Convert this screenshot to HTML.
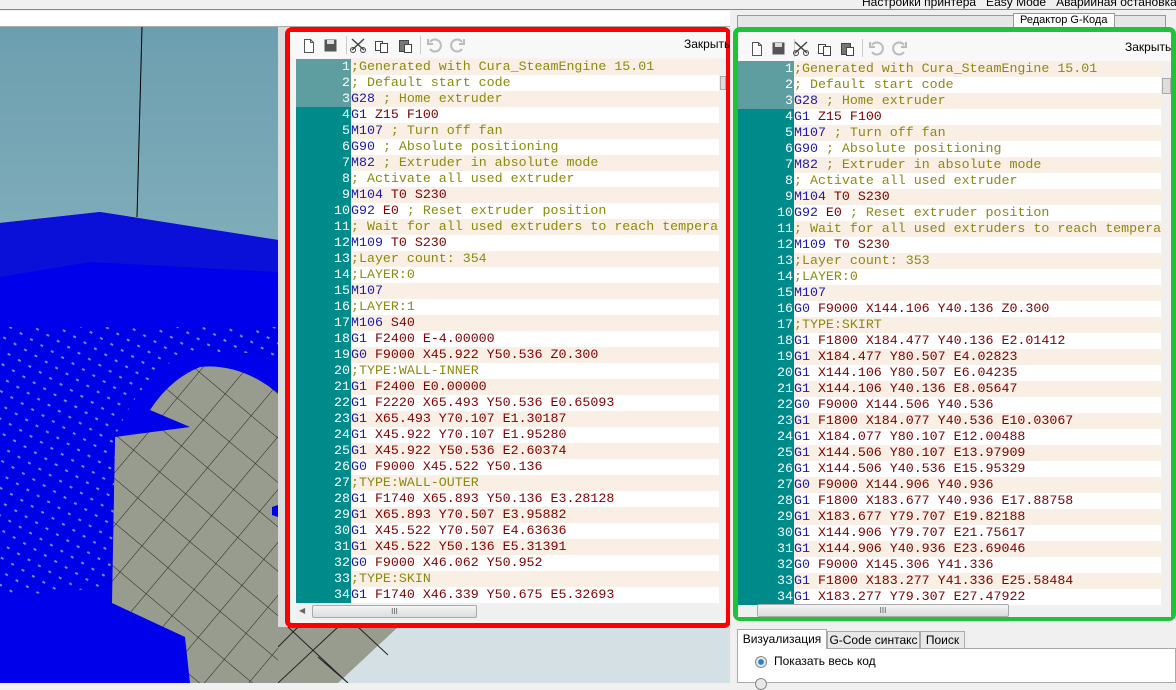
<!DOCTYPE html>
<html><head><meta charset="utf-8"><style>
*{margin:0;padding:0;box-sizing:border-box}
body{width:1176px;height:683px;overflow:hidden;position:relative;font-family:"Liberation Sans",sans-serif;background:#f0f0f0}
.abs{position:absolute}
.code{font-family:"Liberation Mono",monospace;font-size:13.3px;color:#800000}
.r{height:16px;line-height:16px;white-space:nowrap;display:flex}
.r:nth-child(odd){background:#faefe4}
.r:nth-child(even){background:#fff}
.r b{font-weight:normal;color:#fff;text-align:right;background:#008b8b;flex:none;padding-right:1px}
.r.h b{background:#5f9ea0}
.c{color:#8a8a10}
u{text-decoration:none;color:#1a1aa8}
.L b{width:55px}.R b{width:56px}
.tb svg{position:absolute}
</style></head><body>
<div class="abs" style="left:0;top:0;width:1176px;height:10px;background:#f0f0f0;border-bottom:1px solid #888"></div>
<div class="abs" style="left:862px;top:-5px;font-size:12px;color:#000;white-space:nowrap">Настройки принтера&nbsp;&nbsp;&nbsp;Easy Mode&nbsp;&nbsp;&nbsp;Аварийная остановка</div>
<div class="abs" style="left:0;top:11px;width:730px;height:16px;background:#fff;border-bottom:1px solid #aaa"></div>
<!-- 3D view -->
<svg class="abs" style="left:0;top:27px" width="278" height="656">
<defs>
<linearGradient id="sky" x1="0" y1="0" x2="0" y2="1"><stop offset="0" stop-color="#6c9fb0"/><stop offset="1" stop-color="#a8c8cc"/></linearGradient>
<pattern id="grid" width="34" height="34" patternUnits="userSpaceOnUse" patternTransform="rotate(40)"><rect width="34" height="34" fill="#989c8e"/><path d="M0 0H34M0 0V34" stroke="#222" stroke-width="1"/></pattern>
<pattern id="lat" width="12" height="12" patternUnits="userSpaceOnUse" patternTransform="rotate(30)"><rect width="12" height="12" fill="#0000e6"/><rect x="2" y="2" width="3" height="2" fill="#7090d0"/></pattern>
</defs>
<rect width="278" height="656" fill="url(#sky)"/>
<rect y="340" width="278" height="316" fill="url(#grid)"/>
<line x1="142" y1="0" x2="137" y2="190" stroke="#000"/>
<path d="M0 196 L100 185 L278 213 L278 366 Q240 336 200 340 Q170 352 150 383 L190 400 L115 410 L112 576 L185 610 L190 656 L0 656 Z" fill="#0000ea"/>
<path d="M0 300 L278 300 L278 330 Q220 320 180 330 Q140 350 115 410 L112 560 L0 570 Z" fill="url(#lat)"/>
<path d="M0 196 L100 185 L278 213 L278 245 L90 235 L0 250Z" fill="#0a10d8"/>
<path d="M272 480 L278 478 L278 490 L272 488Z" fill="#0000e8"/>
</svg>
<div class="abs" style="left:278px;top:27px;width:10px;height:600px;background:#d8dcdc"></div>
<svg class="abs" style="left:278px;top:627px" width="452" height="56">
<rect width="452" height="56" fill="#d4e0e4"/>
<path d="M0 0H120L60 56H0Z" fill="#989c8e"/>
<path d="M0 20L20 0M0 56L60 0M40 30L70 56M10 0L70 56M80 0L110 28" stroke="#222"/>
</svg>
<!-- LEFT panel -->
<div class="abs" style="left:285px;top:27px;width:446px;height:601px;border:5px solid #f00;border-radius:7px;background:#f4f4f4"></div>
<div class="abs tb" style="left:290px;top:32px;width:436px;height:26px;background:#f8f8f8">
<svg style="left:13px;top:7px" width="12" height="14"><path d="M1.5 .5h6l3 3v10h-9z M7.5 .5v3h3" fill="#fff" stroke="#555"/></svg>
<svg style="left:34px;top:7px" width="13" height="13"><rect x=".5" y=".5" width="12" height="12" fill="#555"/><rect x="3" y="1" width="7" height="4" fill="#ddd"/></svg>
<div class="abs" style="left:56px;top:4px;width:1px;height:18px;background:#ccc"></div>
<svg style="left:60px;top:6px" width="16" height="15"><path d="M2 1l12 11M14 1L2 12" stroke="#444" stroke-width="1.5"/><circle cx="3" cy="12" r="2.5" fill="none" stroke="#444"/><circle cx="13" cy="12" r="2.5" fill="none" stroke="#444"/></svg>
<svg style="left:84px;top:6px" width="15" height="15"><rect x="1.5" y="3.5" width="7" height="9" fill="#fff" stroke="#444"/><rect x="6.5" y="5.5" width="7" height="9" fill="#fff" stroke="#444"/></svg>
<svg style="left:108px;top:6px" width="15" height="15"><rect x="1.5" y="2.5" width="9" height="11" fill="#777" stroke="#444"/><rect x="6.5" y="6.5" width="7" height="8" fill="#fff" stroke="#444"/></svg>
<div class="abs" style="left:130px;top:4px;width:1px;height:18px;background:#ccc"></div>
<svg style="left:137px;top:6px" width="15" height="15"><path d="M3 4A6 6 0 1 1 3 11" fill="none" stroke="#bbb" stroke-width="2"/><path d="M1 1v5h5" fill="none" stroke="#bbb" stroke-width="2"/></svg>
<svg style="left:160px;top:6px" width="15" height="15"><path d="M12 4A6 6 0 1 0 12 11" fill="none" stroke="#bbb" stroke-width="2"/><path d="M14 1v5h-5" fill="none" stroke="#bbb" stroke-width="2"/></svg>
<div class="abs" style="left:394px;top:5px;font-size:12px;color:#000">Закрыть</div>
</div>
<div class="abs code L" style="left:296px;top:59px;width:423px;height:544px;overflow:hidden">
<div class="r h"><b>1</b><span class="c">;Generated with Cura_SteamEngine 15.01</span></div>
<div class="r h"><b>2</b><span class="c">; Default start code</span></div>
<div class="r h"><b>3</b><span><u>G28</u> <span class="c">; Home extruder</span></span></div>
<div class="r"><b>4</b><span><u>G1</u> Z15 F100</span></div>
<div class="r"><b>5</b><span><u>M107</u> <span class="c">; Turn off fan</span></span></div>
<div class="r"><b>6</b><span><u>G90</u> <span class="c">; Absolute positioning</span></span></div>
<div class="r"><b>7</b><span><u>M82</u> <span class="c">; Extruder in absolute mode</span></span></div>
<div class="r"><b>8</b><span class="c">; Activate all used extruder</span></div>
<div class="r"><b>9</b><span><u>M104</u> T0 S230</span></div>
<div class="r"><b>10</b><span><u>G92</u> E0 <span class="c">; Reset extruder position</span></span></div>
<div class="r"><b>11</b><span class="c">; Wait for all used extruders to reach tempera</span></div>
<div class="r"><b>12</b><span><u>M109</u> T0 S230</span></div>
<div class="r"><b>13</b><span class="c">;Layer count: 354</span></div>
<div class="r"><b>14</b><span class="c">;LAYER:0</span></div>
<div class="r"><b>15</b><span><u>M107</u></span></div>
<div class="r"><b>16</b><span class="c">;LAYER:1</span></div>
<div class="r"><b>17</b><span><u>M106</u> S40</span></div>
<div class="r"><b>18</b><span><u>G1</u> F2400 E-4.00000</span></div>
<div class="r"><b>19</b><span><u>G0</u> F9000 X45.922 Y50.536 Z0.300</span></div>
<div class="r"><b>20</b><span class="c">;TYPE:WALL-INNER</span></div>
<div class="r"><b>21</b><span><u>G1</u> F2400 E0.00000</span></div>
<div class="r"><b>22</b><span><u>G1</u> F2220 X65.493 Y50.536 E0.65093</span></div>
<div class="r"><b>23</b><span><u>G1</u> X65.493 Y70.107 E1.30187</span></div>
<div class="r"><b>24</b><span><u>G1</u> X45.922 Y70.107 E1.95280</span></div>
<div class="r"><b>25</b><span><u>G1</u> X45.922 Y50.536 E2.60374</span></div>
<div class="r"><b>26</b><span><u>G0</u> F9000 X45.522 Y50.136</span></div>
<div class="r"><b>27</b><span class="c">;TYPE:WALL-OUTER</span></div>
<div class="r"><b>28</b><span><u>G1</u> F1740 X65.893 Y50.136 E3.28128</span></div>
<div class="r"><b>29</b><span><u>G1</u> X65.893 Y70.507 E3.95882</span></div>
<div class="r"><b>30</b><span><u>G1</u> X45.522 Y70.507 E4.63636</span></div>
<div class="r"><b>31</b><span><u>G1</u> X45.522 Y50.136 E5.31391</span></div>
<div class="r"><b>32</b><span><u>G0</u> F9000 X46.062 Y50.952</span></div>
<div class="r"><b>33</b><span class="c">;TYPE:SKIN</span></div>
<div class="r"><b>34</b><span><u>G1</u> F1740 X46.339 Y50.675 E5.32693</span></div>
</div>
<div class="abs" style="left:719px;top:59px;width:7px;height:544px;background:#f0f0f0"></div>
<div class="abs" style="left:720px;top:76px;width:6px;height:14px;background:#ddd;border:1px solid #aaa"></div>
<div class="abs" style="left:296px;top:603px;width:430px;height:17px;background:#f0f0f0"></div>
<div class="abs" style="left:299px;top:606px;font-size:8px;color:#666">◀</div>
<div class="abs" style="left:312px;top:605px;width:165px;height:13px;background:linear-gradient(#f4f4f4,#dcdcdc);border:1px solid #aaa;border-radius:2px;font-size:8px;text-align:center;line-height:11px;color:#555">III</div>
<!-- RIGHT panel -->
<div class="abs" style="left:730px;top:11px;width:446px;height:616px;background:#f0f0f0"></div>
<div class="abs" style="left:737px;top:15px;width:429px;height:14px;background:#e6e6e6;border:1px solid #999"></div>
<div class="abs" style="left:1013px;top:13px;width:102px;height:16px;background:#fff;border:1px solid #999;border-bottom:none;font-size:11px;padding-left:6px;overflow:hidden;line-height:12px">Редактор G-Кода</div>
<div class="abs" style="left:733px;top:27px;width:443px;height:594px;border:5px solid #1ec33a;border-radius:7px;background:#f8f8f8"></div>
<div class="abs tb" style="left:738px;top:35px;width:433px;height:26px">
<svg style="left:13px;top:7px" width="12" height="14"><path d="M1.5 .5h6l3 3v10h-9z M7.5 .5v3h3" fill="#fff" stroke="#555"/></svg>
<svg style="left:34px;top:7px" width="13" height="13"><rect x=".5" y=".5" width="12" height="12" fill="#555"/><rect x="3" y="1" width="7" height="4" fill="#ddd"/></svg>
<div class="abs" style="left:56px;top:4px;width:1px;height:18px;background:#ccc"></div>
<svg style="left:55px;top:6px" width="16" height="15"><path d="M2 1l12 11M14 1L2 12" stroke="#444" stroke-width="1.5"/><circle cx="3" cy="12" r="2.5" fill="none" stroke="#444"/><circle cx="13" cy="12" r="2.5" fill="none" stroke="#444"/></svg>
<svg style="left:79px;top:6px" width="15" height="15"><rect x="1.5" y="3.5" width="7" height="9" fill="#fff" stroke="#444"/><rect x="6.5" y="5.5" width="7" height="9" fill="#fff" stroke="#444"/></svg>
<svg style="left:102px;top:6px" width="15" height="15"><rect x="1.5" y="2.5" width="9" height="11" fill="#777" stroke="#444"/><rect x="6.5" y="6.5" width="7" height="8" fill="#fff" stroke="#444"/></svg>
<div class="abs" style="left:124px;top:4px;width:1px;height:18px;background:#ccc"></div>
<svg style="left:131px;top:6px" width="15" height="15"><path d="M3 4A6 6 0 1 1 3 11" fill="none" stroke="#bbb" stroke-width="2"/><path d="M1 1v5h5" fill="none" stroke="#bbb" stroke-width="2"/></svg>
<svg style="left:154px;top:6px" width="15" height="15"><path d="M12 4A6 6 0 1 0 12 11" fill="none" stroke="#bbb" stroke-width="2"/><path d="M14 1v5h-5" fill="none" stroke="#bbb" stroke-width="2"/></svg>
<div class="abs" style="left:387px;top:5px;font-size:12px;color:#000">Закрыть</div>
</div>
<div class="abs code R" style="left:738px;top:61px;width:423px;height:544px;overflow:hidden">
<div class="r h"><b>1</b><span class="c">;Generated with Cura_SteamEngine 15.01</span></div>
<div class="r h"><b>2</b><span class="c">; Default start code</span></div>
<div class="r h"><b>3</b><span><u>G28</u> <span class="c">; Home extruder</span></span></div>
<div class="r"><b>4</b><span><u>G1</u> Z15 F100</span></div>
<div class="r"><b>5</b><span><u>M107</u> <span class="c">; Turn off fan</span></span></div>
<div class="r"><b>6</b><span><u>G90</u> <span class="c">; Absolute positioning</span></span></div>
<div class="r"><b>7</b><span><u>M82</u> <span class="c">; Extruder in absolute mode</span></span></div>
<div class="r"><b>8</b><span class="c">; Activate all used extruder</span></div>
<div class="r"><b>9</b><span><u>M104</u> T0 S230</span></div>
<div class="r"><b>10</b><span><u>G92</u> E0 <span class="c">; Reset extruder position</span></span></div>
<div class="r"><b>11</b><span class="c">; Wait for all used extruders to reach tempera</span></div>
<div class="r"><b>12</b><span><u>M109</u> T0 S230</span></div>
<div class="r"><b>13</b><span class="c">;Layer count: 353</span></div>
<div class="r"><b>14</b><span class="c">;LAYER:0</span></div>
<div class="r"><b>15</b><span><u>M107</u></span></div>
<div class="r"><b>16</b><span><u>G0</u> F9000 X144.106 Y40.136 Z0.300</span></div>
<div class="r"><b>17</b><span class="c">;TYPE:SKIRT</span></div>
<div class="r"><b>18</b><span><u>G1</u> F1800 X184.477 Y40.136 E2.01412</span></div>
<div class="r"><b>19</b><span><u>G1</u> X184.477 Y80.507 E4.02823</span></div>
<div class="r"><b>20</b><span><u>G1</u> X144.106 Y80.507 E6.04235</span></div>
<div class="r"><b>21</b><span><u>G1</u> X144.106 Y40.136 E8.05647</span></div>
<div class="r"><b>22</b><span><u>G0</u> F9000 X144.506 Y40.536</span></div>
<div class="r"><b>23</b><span><u>G1</u> F1800 X184.077 Y40.536 E10.03067</span></div>
<div class="r"><b>24</b><span><u>G1</u> X184.077 Y80.107 E12.00488</span></div>
<div class="r"><b>25</b><span><u>G1</u> X144.506 Y80.107 E13.97909</span></div>
<div class="r"><b>26</b><span><u>G1</u> X144.506 Y40.536 E15.95329</span></div>
<div class="r"><b>27</b><span><u>G0</u> F9000 X144.906 Y40.936</span></div>
<div class="r"><b>28</b><span><u>G1</u> F1800 X183.677 Y40.936 E17.88758</span></div>
<div class="r"><b>29</b><span><u>G1</u> X183.677 Y79.707 E19.82188</span></div>
<div class="r"><b>30</b><span><u>G1</u> X144.906 Y79.707 E21.75617</span></div>
<div class="r"><b>31</b><span><u>G1</u> X144.906 Y40.936 E23.69046</span></div>
<div class="r"><b>32</b><span><u>G0</u> F9000 X145.306 Y41.336</span></div>
<div class="r"><b>33</b><span><u>G1</u> F1800 X183.277 Y41.336 E25.58484</span></div>
<div class="r"><b>34</b><span><u>G1</u> X183.277 Y79.307 E27.47922</span></div>
</div>
<div class="abs" style="left:1161px;top:61px;width:10px;height:544px;background:#f0f0f0"></div>
<div class="abs" style="left:1162px;top:78px;width:9px;height:16px;background:#ddd;border:1px solid #aaa"></div>
<div class="abs" style="left:738px;top:605px;width:433px;height:12px;background:#f0f0f0"></div>
<div class="abs" style="left:757px;top:604px;width:252px;height:13px;background:linear-gradient(#f4f4f4,#dcdcdc);border:1px solid #aaa;border-radius:2px;font-size:8px;text-align:center;line-height:11px;color:#555">III</div>
<div class="abs" style="left:730px;top:627px;width:446px;height:56px;background:#f0f0f0"></div>
<div class="abs" style="left:737px;top:648px;width:439px;height:35px;background:#fff;border:1px solid #aaa"></div>
<div class="abs" style="left:737px;top:629px;width:90px;height:20px;background:#fff;border:1px solid #aaa;border-bottom:none;font-size:12px;line-height:18px;text-align:center">Визуализация</div>
<div class="abs" style="left:827px;top:631px;width:93px;height:18px;background:#e8e8e8;border:1px solid #aaa;font-size:12px;line-height:16px;text-align:center">G-Code синтакс</div>
<div class="abs" style="left:920px;top:631px;width:45px;height:18px;background:#e8e8e8;border:1px solid #aaa;font-size:12px;line-height:16px;text-align:center">Поиск</div>
<div class="abs" style="left:755px;top:656px;width:12px;height:12px;border-radius:50%;background:radial-gradient(#2a7fd0 35%,#e8e8e8 45%);border:1px solid #888"></div>
<div class="abs" style="left:774px;top:654px;font-size:12px">Показать весь код</div>
<div class="abs" style="left:755px;top:678px;width:12px;height:12px;border-radius:50%;background:#e8e8e8;border:1px solid #888"></div>
</body></html>
